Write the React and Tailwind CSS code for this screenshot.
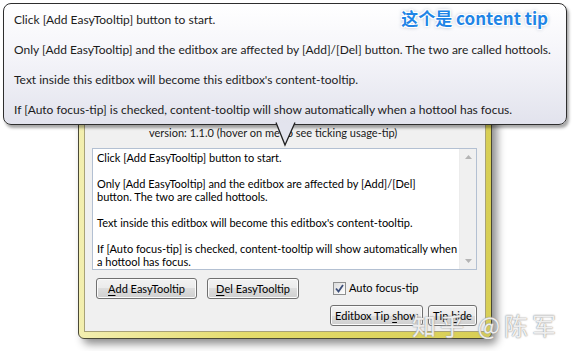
import React from 'react';

const btn =
  'h-[21px] rounded-[3px] border border-[#707070] bg-[linear-gradient(#f2f2f2,#ebebeb_50%,#dddddd_50%,#cfcfcf)] shadow-[inset_0_0_0_1px_#fbfbfb] text-[11px] leading-[19px] text-black flex items-center justify-center';

const Mn = ({ children }) => <span className="underline underline-offset-2">{children}</span>;

const editLines = [
  'Click [Add EasyTooltip] button to start.',
  '',
  'Only [Add EasyTooltip] and the editbox are affected by [Add]/[Del]',
  'button. The two are called hottools.',
  '',
  "Text inside this editbox will become this editbox's content-tooltip.",
  '',
  'If [Auto focus-tip] is checked, content-tooltip will show automatically when',
  'a hottool has focus.',
];

const tipLines = [
  'Click [Add EasyTooltip] button to start.',
  '',
  'Only [Add EasyTooltip] and the editbox are affected by [Add]/[Del] button. The two are called hottools.',
  '',
  "Text inside this editbox will become this editbox's content-tooltip.",
  '',
  'If [Auto focus-tip] is checked, content-tooltip will show automatically when a hottool has focus.',
];

export default function App() {
  return (
    <div className="relative w-[573px] h-[351px] bg-white overflow-hidden font-['Lato','Liberation_Sans',sans-serif]">
      {/* dialog window */}
      <div className="pt-[60px] pl-[78px]">
        <div className="w-[414px] rounded-[6px] border border-[#4a4936] bg-[linear-gradient(90deg,#f3efb0,#e4dc6c_40%,#d8cf55)] px-[5px] pt-[5px] pb-[6px] shadow-[5px_5px_8px_rgba(0,0,0,0.45)]">
          <div className="border border-[#a8a278] bg-[#f0f0f0] flex flex-col pt-[59px] pb-[5px]">
            <div className="h-[14px] leading-[14px] text-[11px] text-[#1a1a1a] pl-[64px] whitespace-nowrap">
              version: 1.1.0 (hover on me to see ticking usage-tip)
            </div>

            {/* editbox */}
            <div className="mt-[8px] ml-[7px] w-[385px] h-[122px] border border-[#b3c0d2] bg-white flex">
              <div className="flex-1 pl-[4px] pt-[2px] text-[11px] leading-[13px] text-black">
                {editLines.map((l, i) => (
                  <div key={i} className="h-[13px] whitespace-nowrap">{l}</div>
                ))}
              </div>
              <div className="w-[17px] bg-[#f0f0f0] border-l border-[#ececec] flex flex-col justify-between items-center py-[6px]">
                <svg width="7" height="4" viewBox="0 0 7 4"><path d="M0 4 L3.5 0 L7 4 Z" fill="#b4b4b4" /></svg>
                <svg width="7" height="4" viewBox="0 0 7 4"><path d="M0 0 L3.5 4 L7 0 Z" fill="#b4b4b4" /></svg>
              </div>
            </div>

            {/* row 1 */}
            <div className="mt-[8px] flex items-center">
              <div className={`${btn} ml-[11px] w-[101px]`}>
                <Mn>A</Mn>dd EasyTooltip
              </div>
              <div className={`${btn} ml-[10px] w-[92px]`}>
                <Mn>D</Mn>el EasyTooltip
              </div>
              <div className="ml-[34px] flex items-center gap-[3px] text-[11px] text-black">
                <div className="w-[13px] h-[13px] border border-[#8e8f8f] bg-[linear-gradient(135deg,#dcdcdc,#ffffff)] flex items-center justify-center">
                  <svg width="9" height="9" viewBox="0 0 9 9">
                    <path d="M1 4.5 L3.5 7.5 L8 1" fill="none" stroke="#3d4f7a" strokeWidth="1.8" />
                  </svg>
                </div>
                <span>Auto focus-tip</span>
              </div>
            </div>

            {/* row 2 */}
            <div className="mt-[6px] flex justify-end gap-[5px] pr-[8px]">
              <div className={`${btn} w-[93px]`}>
                Editbox Tip&nbsp;<Mn>s</Mn>how
              </div>
              <div className={`${btn} w-[49px]`}>
                Tip&nbsp;<Mn>h</Mn>ide
              </div>
            </div>
          </div>
        </div>
      </div>

      {/* balloon tooltip */}
      <div className="absolute left-[3px] top-[3px] w-[564px] h-[122px] rounded-[8px] border border-[#2e2e2e] bg-[linear-gradient(#ffffff,#f4f4f9_45%,#e2e3ed)] shadow-[2px_3px_3px_rgba(0,0,0,0.35)] pl-[10px] pt-[8px] text-[12px] leading-[15px] text-[#1c1c1c]">
        {tipLines.map((l, i) => (
          <div key={i} className="h-[15px] whitespace-nowrap">{l}</div>
        ))}
        <div className="absolute right-[18px] top-[4px] text-[17px] leading-[20px] font-bold text-[#1f85e6] font-['Noto_Sans_CJK_SC','Noto_Sans',sans-serif] [text-shadow:0_0_1px_#fff,1px_1px_0_#fff,-1px_-1px_0_#fff,1px_-1px_0_#fff,-1px_1px_0_#fff,0_0_4px_#8a9ab0]">
          这个是 content tip
        </div>
      </div>
      <svg className="absolute left-[272px] top-[122px]" width="28" height="26" viewBox="0 0 28 26">
        <path d="M4 0.5 L13 23 L23 0.5 Z" fill="#e3e4ee" />
        <path d="M4 0.5 L13 23 L23 0.5" fill="none" stroke="#222" strokeWidth="1.3" />
      </svg>

      {/* watermark */}
      <div className="absolute left-[412px] top-[311px] text-[24px] leading-[28px] tracking-[4px] text-white/85 font-['Noto_Sans_CJK_SC',sans-serif] [text-shadow:0_0_1px_#888,0_0_2px_#aaa] whitespace-nowrap">
        知乎 @陈军
      </div>
    </div>
  );
}
